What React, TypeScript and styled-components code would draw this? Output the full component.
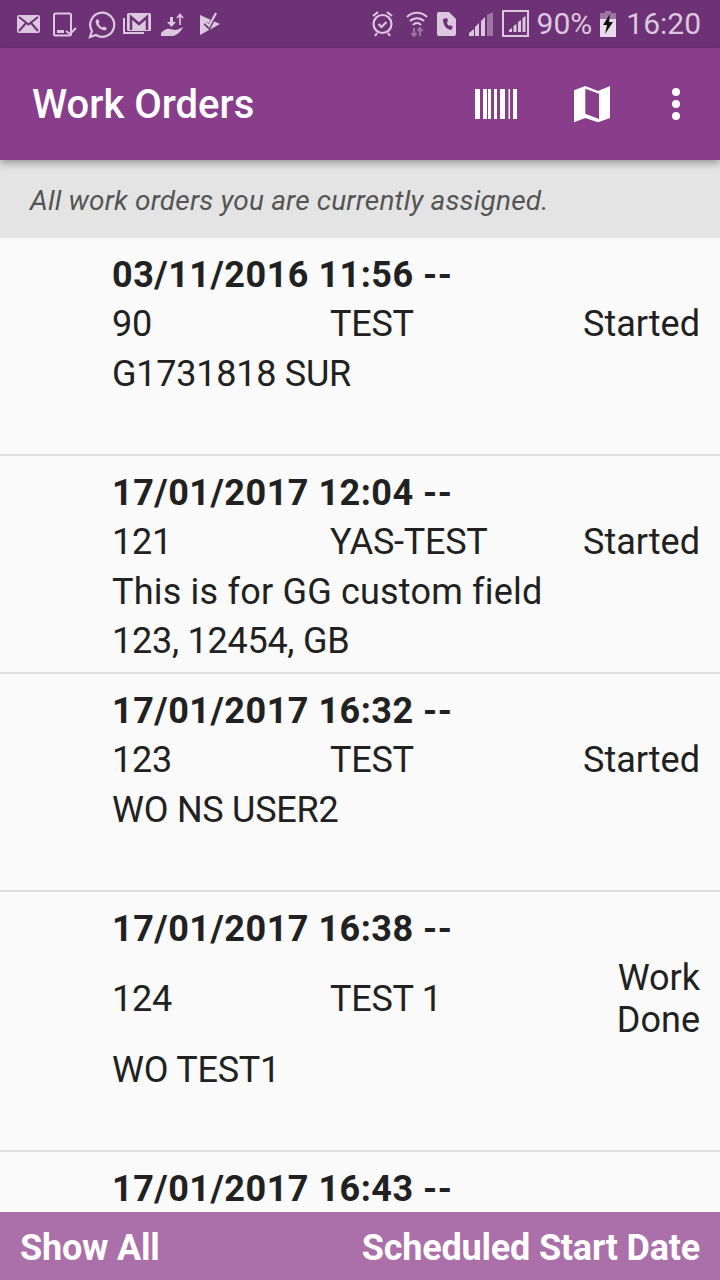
import styled, { createGlobalStyle } from "styled-components";

const Global = createGlobalStyle`
  html, body { margin: 0; padding: 0; background: #fafafa; }
  body { font-family: Roboto, "Liberation Sans", sans-serif; }
`;

const Page = styled.div`
  width: 720px;
  height: 1280px;
  display: flex;
  flex-direction: column;
  overflow: hidden;
  color: #212121;
`;
const StatusBar = styled.div`
  height: 48px;
  flex: none;
  background: #6d3176;
  display: flex;
  align-items: center;
  justify-content: space-between;
  padding: 0 19px 0 16px;
  color: #dcc8de;
`;
const StatusGroup = styled.div`
  display: flex;
  align-items: center;
  height: 48px;
`;
const StatusText = styled.span<{ $gap: number }>`
  font-size: 30px;
  line-height: 48px;
  margin-left: ${(p) => p.$gap}px;
`;
const BatteryIcon = styled.svg`
  margin-left: 8px;
`;
const AppBar = styled.header`
  height: 112px;
  flex: none;
  background: #883e8b;
  display: flex;
  align-items: center;
  padding: 0 40px 0 32px;
  box-shadow: 0 3px 8px rgba(0, 0, 0, 0.35);
  position: relative;
  z-index: 1;
`;
const Title = styled.h1`
  flex: 1;
  margin: 0;
  color: #fff;
  font-size: 40px;
  font-weight: 500;
`;
const Actions = styled.div`
  display: flex;
  align-items: center;
`;
const ActionIcon = styled.svg<{ $gap?: number }>`
  display: block;
  margin-left: ${(p) => p.$gap ?? 0}px;
`;
const Subtitle = styled.div`
  height: 78px;
  flex: none;
  box-sizing: border-box;
  background: #e4e4e4;
  color: #555;
  font-size: 28px;
  font-style: italic;
  letter-spacing: 0.17px;
  line-height: 82px;
  padding-left: 30px;
`;
const List = styled.div`
  flex: 1;
  min-height: 0;
  overflow: hidden;
  background: #fafafa;
`;
const Row = styled.div<{ $height: number }>`
  height: ${(p) => p.$height}px;
  box-sizing: border-box;
  border-bottom: 2px solid #dcdcdc;
  padding: 13px 20px 0 112px;
  font-size: 36px;
  letter-spacing: -0.25px;
`;
const DateLine = styled.div`
  font-weight: 700;
  line-height: 48px;
  letter-spacing: 0.5px;
`;
const Columns = styled.div`
  display: flex;
  align-items: center;
  min-height: 49px;
  margin-bottom: 2px;
`;
const OrderNo = styled.div`
  width: 218px;
  flex: none;
`;
const Kind = styled.div`
  flex: 1;
`;
const State = styled.div<{ $wrap?: boolean }>`
  width: 120px;
  flex: none;
  text-align: right;
  line-height: 42px;
  letter-spacing: 0;
  padding: ${(p) => (p.$wrap ? "4px 0 3px" : "0")};
`;
const Detail = styled.div<{ $spaced?: boolean }>`
  line-height: 49px;
  letter-spacing: ${(p) => (p.$spaced ? "0.2px" : "-0.25px")};
`;
const BottomBar = styled.footer`
  height: 68px;
  flex: none;
  box-sizing: border-box;
  background: #ab6fa9;
  color: #fff;
  font-size: 36px;
  font-weight: 700;
  letter-spacing: -0.2px;
  display: flex;
  align-items: center;
  justify-content: space-between;
  padding: 3px 20px 0;
`;

const StatusLeft = () => (
  <StatusGroup>
    <svg width="210" height="48" viewBox="0 0 210 48" fill="none">
      <rect x="1" y="15" width="23" height="18" rx="2" fill="#dcc8de" />
      <path d="M3 17l9.500 7.500L22 17M3 31l7-8M22 31l-7-8" stroke="#6d3176" strokeWidth="2" />
      <rect x="38" y="13.500" width="17" height="22" rx="1.500" stroke="#dcc8de" strokeWidth="2" />
      <rect x="41" y="30" width="7" height="3" fill="#dcc8de" />
      <path d="M50 31l4 3 6-6" stroke="#dcc8de" strokeWidth="2" />
      <path d="M74 37l2-6a12 12 0 1 1 4 4z" stroke="#dcc8de" strokeWidth="2.200" />
      <path d="M80 20c1-1 2-1 2.500 0l1 2-1 1.500c1 2 2 3 4 4l1.500-1 2 1c1 .7 1 1.700 0 2.500-4 2-12-5-10-10z" fill="#dcc8de" />
      <path d="M108 18v15h20" stroke="#dcc8de" strokeWidth="2" />
      <rect x="111" y="13" width="24" height="18" rx="1.500" fill="#dcc8de" />
      <path d="M115 30V17l8 7 8-7v13" stroke="#6d3176" strokeWidth="2.500" />
      <path d="M145 36v-3c3-3 6-5 9-4l5 1c2 0 6-2 8-3-1 3-5 8-10 9z" fill="#dcc8de" />
      <path d="M154 17h3v5h3l-4.500 5-4.500-5h3z" fill="#dcc8de" />
      <path d="M164 25V15M161 18l3-3.500 3 3.500" stroke="#dcc8de" strokeWidth="1.600" />
      <path d="M184 15l20 9-20 11z" fill="#dcc8de" />
      <path d="M189 23l4 4 7-13" stroke="#6d3176" strokeWidth="4" />
      <path d="M189 22l4 4 7-13" stroke="#dcc8de" strokeWidth="2.200" />
    </svg>
  </StatusGroup>
);

const StatusRight = () => (
  <StatusGroup>
    <svg width="160" height="48" viewBox="0 0 160 48" fill="none">
      <circle cx="11.500" cy="24" r="9" stroke="#dcc8de" strokeWidth="2.200" />
      <path d="M7.500 24l3 3 5-5M2 16l5-4M21 16l-5-4M6 33l-2 3M17 33l2 3" stroke="#dcc8de" strokeWidth="2.200" />
      <path d="M36 17a14 14 0 0 1 20 0M39 21a10 10 0 0 1 14 0M42 25a5 5 0 0 1 8 0" stroke="#dcc8de" strokeWidth="2" />
      <path d="M43 28v8M40.500 33l2.500 3 2.500-3" stroke="#9c76a0" strokeWidth="2" />
      <path d="M49 36v-8M46.500 31l2.500-3 2.500 3" stroke="#9c76a0" strokeWidth="2" />
      <path d="M68 12h10l7 7v15a2 2 0 0 1-2 2H68a2 2 0 0 1-2-2V14a2 2 0 0 1 2-2z" fill="#dcc8de" />
      <path d="M72 19c0 6 3 10 8 11l2-3-3-2-1 1c-1-1-2-2-2-4l1-1-1-3z" fill="#6d3176" />
      <path d="M98 36v-3l5-4v7zM104 36V27l4-4v13zM110 36V21l4-4v19z" fill="#dcc8de" />
      <path d="M116 36V15l6-3v24z" fill="#9c76a0" />
      <rect x="132" y="11" width="25" height="25" stroke="#dcc8de" strokeWidth="2" />
      <path d="M138 32v-2l3-2v4zM142.500 32v-6l3-2v8zM147 32V22l3-2v12zM151.500 32V18l3-2v16z" fill="#dcc8de" />
    </svg>
    <StatusText $gap={6}>90%</StatusText>
    <BatteryIcon width="16" height="26" viewBox="0 0 16 26">
      <rect x="5" y="0" width="6" height="3" fill="#9c76a0" />
      <rect x="0" y="2" width="16" height="6" fill="#9c76a0" />
      <rect x="0" y="8" width="16" height="18" fill="#e8dcea" />
      <path d="M10 3L3 14h4l-2 9 8-12H9z" fill="#111" />
    </BatteryIcon>
    <StatusText $gap={10}>16:20</StatusText>
  </StatusGroup>
);

const rows = [
  { date: "03/11/2016 11:56 --", no: "90", kind: "TEST", state: "Started", details: ["G1731818 SUR"] },
  { date: "17/01/2017 12:04 --", no: "121", kind: "YAS-TEST", state: "Started", details: ["This is for GG custom field", "123, 12454, GB"] },
  { date: "17/01/2017 16:32 --", no: "123", kind: "TEST", state: "Started", details: ["WO NS USER2"] },
];

export default function App() {
  return (
    <Page>
      <Global />
      <StatusBar>
        <StatusLeft />
        <StatusRight />
      </StatusBar>
      <AppBar>
        <Title>Work Orders</Title>
        <Actions>
          <ActionIcon width="42" height="30" viewBox="0 0 42 30" fill="#fff">
            <path d="M0 0h5v30H0zM8 0h4v30H8zM13 0h3v30h-3zM19 0h3v30h-3zM25 0h5v30h-5zM33.500 0h1.500v30h-1.500zM38 0h4v30h-4z" />
          </ActionIcon>
          <ActionIcon $gap={57} width="36" height="37" viewBox="0 0 36 37" fill="#fff">
            <path
              fillRule="evenodd"
              d="M0 4.300L11.300 0 24 5 36 0v32l-12 4.300L11.300 32 0 36.300zM11.300 2.700v25L25 33V7.700z"
            />
          </ActionIcon>
          <ActionIcon $gap={62} width="8" height="32" viewBox="0 0 8 32" fill="#fff">
            <circle cx="4" cy="4" r="4" />
            <circle cx="4" cy="16" r="4" />
            <circle cx="4" cy="28" r="4" />
          </ActionIcon>
        </Actions>
      </AppBar>
      <Subtitle>All work orders you are currently assigned.</Subtitle>
      <List>
        {rows.map((r) => (
          <Row key={r.date} $height={218}>
            <DateLine>{r.date}</DateLine>
            <Columns>
              <OrderNo>{r.no}</OrderNo>
              <Kind>{r.kind}</Kind>
              <State>{r.state}</State>
            </Columns>
            {r.details.map((d) => (
              <Detail key={d} $spaced={d.startsWith("This")}>
                {d}
              </Detail>
            ))}
          </Row>
        ))}
        <Row $height={260}>
          <DateLine>17/01/2017 16:38 --</DateLine>
          <Columns>
            <OrderNo>124</OrderNo>
            <Kind>TEST 1</Kind>
            <State $wrap>Work Done</State>
          </Columns>
          <Detail>WO TEST1</Detail>
        </Row>
        <Row $height={218}>
          <DateLine>17/01/2017 16:43 --</DateLine>
        </Row>
      </List>
      <BottomBar>
        <span>Show All</span>
        <span>Scheduled Start Date</span>
      </BottomBar>
    </Page>
  );
}
